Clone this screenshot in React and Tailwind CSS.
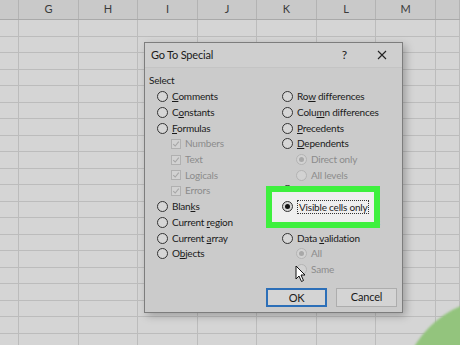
import React from 'react';

const COLS = ['', 'G', 'H', 'I', 'J', 'K', 'L', 'M', ''];
const GRID = 'grid grid-cols-[19px_60px_59px_60px_59px_60px_59px_60px_1fr]';

function Radio({ on, dim }) {
  return (
    <span
      className={`flex h-[11px] w-[11px] shrink-0 items-center justify-center rounded-full border ${
        dim ? 'border-[#b4b4b4] bg-[#d2d2d2]' : 'border-[#333] bg-[#d6d6d6]'
      }`}
    >
      {on && <span className={`h-[5px] w-[5px] rounded-full ${dim ? 'bg-[#a8a8a8]' : 'bg-[#111]'}`} />}
    </span>
  );
}

function Check() {
  return (
    <span className="flex h-[10px] w-[10px] shrink-0 items-center justify-center border border-[#b0b0b0] bg-[#d2d2d2]">
      <svg viewBox="0 0 10 10" className="h-[8px] w-[8px]">
        <path d="M1.5 5.2 L4 7.5 L8.5 2" fill="none" stroke="#a6a6a6" strokeWidth="1.3" />
      </svg>
    </span>
  );
}

// label with an underlined access key
function L({ t, k }) {
  if (k == null) return <span>{t}</span>;
  return (
    <span>
      {t.slice(0, k)}
      <span className="underline underline-offset-[1px]">{t[k]}</span>
      {t.slice(k + 1)}
    </span>
  );
}

function Row({ children, indent, className = '' }) {
  return (
    <div className={`flex h-[15.7px] items-center gap-[4px] ${indent ? 'pl-[14px]' : ''} ${className}`}>
      {children}
    </div>
  );
}

export default function App() {
  const rows = Array.from({ length: 20 });

  return (
    <div
      className="relative h-[345px] w-[460px] overflow-hidden bg-[#d5d5d5]"
      style={{ fontFamily: 'Lato, "Noto Sans", sans-serif' }}
    >
      {/* column headers */}
      <div className={`${GRID} h-[20px] border-b border-[#a9a9a9] bg-[#c9c9c9]`}>
        {COLS.map((c, i) => (
          <div key={i} className="flex items-center justify-center border-r border-[#b3b3b3] text-[11px] text-[#3a3a3a]">
            {c}
          </div>
        ))}
      </div>

      {/* cells */}
      {rows.map((_, r) => (
        <div key={r} className={`${GRID} h-[16.5px]`}>
          {COLS.map((_, i) => (
            <div key={i} className="border-b border-r border-[#bcbcbc]" />
          ))}
        </div>
      ))}

      {/* green circle corner */}
      <div className="absolute left-[400px] top-[298px] h-[200px] w-[200px] rounded-full bg-[#93c47d] blur-[1px]" />

      {/* dialog */}
      <div className="absolute left-[144px] top-[42px] flex h-[271px] w-[259px] flex-col border border-[#7d7d7d] bg-[#cbcbcb] tracking-[-0.2px] text-[#1a1a1a] shadow-[3px_3px_8px_rgba(0,0,0,0.25)]">
        <div className="flex h-[25px] items-center border-b border-[#c4c4c4] bg-[#cfcfcf] pl-[6px]">
          <span className="text-[11px]">Go To Special</span>
          <span className="ml-auto mr-[30px] text-[12px]">?</span>
          <svg viewBox="0 0 10 10" className="mr-[15px] h-[10px] w-[10px]">
            <path d="M1 1 L9 9 M9 1 L1 9" stroke="#222" strokeWidth="1.1" />
          </svg>
        </div>

        <div className="pl-[4px] pt-[5px] text-[10px]">Select</div>

        <div className="relative flex pt-[1px] text-[10px]">
          {/* left column */}
          <div className="flex w-[137px] flex-col pl-[12px]">
            <Row><Radio /><L t="Comments" k={0} /></Row>
            <Row><Radio /><L t="Constants" k={1} /></Row>
            <Row><Radio /><L t="Formulas" k={0} /></Row>
            <Row indent className="text-[#8c8c8c]"><Check /><span>Numbers</span></Row>
            <Row indent className="text-[#8c8c8c]"><Check /><span>Text</span></Row>
            <Row indent className="text-[#8c8c8c]"><Check /><span>Logicals</span></Row>
            <Row indent className="text-[#8c8c8c]"><Check /><span>Errors</span></Row>
            <Row><Radio /><L t="Blanks" k={4} /></Row>
            <Row><Radio /><L t="Current region" k={8} /></Row>
            <Row><Radio /><L t="Current array" k={8} /></Row>
            <Row><Radio /><L t="Objects" k={1} /></Row>
          </div>

          {/* right column */}
          <div className="flex flex-col">
            <Row><Radio /><L t="Row differences" k={2} /></Row>
            <Row><Radio /><L t="Column differences" k={4} /></Row>
            <Row><Radio /><L t="Precedents" k={0} /></Row>
            <Row><Radio /><L t="Dependents" k={0} /></Row>
            <Row indent className="text-[#8c8c8c]"><Radio on dim /><span>Direct only</span></Row>
            <Row indent className="text-[#8c8c8c]"><Radio dim /><span>All levels</span></Row>
            <Row><Radio /><L t="Last cell" k={5} /></Row>
            <Row className="relative z-30">
              <Radio on />
              <span className="border border-dotted border-[#333] px-[1px] leading-[12px]">Visible cells only</span>
            </Row>
            <Row><Radio /><L t="Conditional formats" k={11} /></Row>
            <Row><Radio /><L t="Data validation" k={5} /></Row>
            <Row indent className="text-[#8c8c8c]"><Radio on dim /><span>All</span></Row>
            <Row indent className="text-[#8c8c8c]"><Radio dim /><span>Same</span></Row>
          </div>

          {/* green highlight */}
          <div className="pointer-events-none absolute left-[121px] top-[98px] z-20 h-[42px] w-[114px] border-[6px] border-[#3ef03e] bg-[#efefef]" />
        </div>

        <div className="mt-auto flex justify-end gap-[9px] pb-[5px] pr-[5px]">
          <button className="h-[19px] w-[61px] border-2 border-[#2c6fb8] bg-[#d4d4d4] text-[11px]">OK</button>
          <button className="h-[19px] w-[61px] border border-[#adadad] bg-[#d4d4d4] text-[11px]">Cancel</button>
        </div>
      </div>

      {/* mouse pointer */}
      <svg viewBox="0 0 12 18" className="absolute left-[295px] top-[265px] z-40 h-[18px] w-[12px]">
        <path d="M1 1 L1 14 L4 11 L6.5 16.5 L8.5 15.5 L6 10 L10 10 Z" fill="#fff" stroke="#111" strokeWidth="1" strokeLinejoin="round" />
      </svg>
    </div>
  );
}
